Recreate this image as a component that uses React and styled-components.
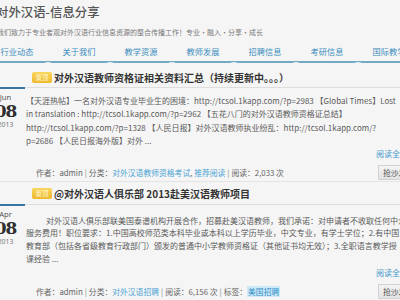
import React from 'react';
import styled, { createGlobalStyle } from 'styled-components';

const GlobalStyle = createGlobalStyle`
    html, body {
        margin: 0;
        padding: 0;
        background: #f5f5f5;
        overflow: hidden;
    }
    body {
        font-family: "Noto Sans CJK SC", sans-serif;
        color: #555;
    }
`;

const Page = styled.div`
    width: 426px;
    margin-left: -14px;
`;

const Header = styled.header`
    padding: 3px 0 0 10px;
`;

const SiteTitle = styled.h1`
    margin: 0;
    font-size: 12.4px;
    line-height: 18px;
    font-weight: 500;
    color: #555;
`;

const Slogan = styled.p`
    margin: 5px 0 0 1px;
    font-size: 7px;
    line-height: 12px;
    color: #7a7a7a;
    white-space: nowrap;
`;

const Nav = styled.nav`
    display: flex;
    margin-top: 3px;
    border-bottom: 2px solid #74a9c4;
`;

const NavItem = styled.a`
    position: relative;
    width: 62px;
    flex: none;
    height: 20px;
    line-height: 20px;
    text-align: center;
    font-size: 8.2px;
    color: #3c8dbf;

    &::after {
        content: '';
        position: absolute;
        right: -3px;
        bottom: -2px;
        width: 6px;
        height: 1px;
        background: #d6e7ef;
        border-radius: 2px 2px 0 0;
    }
`;

const Post = styled.article`
    padding-top: ${p => p.$first ? '4px' : '2px'};
    border-bottom: ${p => p.$first ? '1px solid #e4e4e4' : 'none'};
`;

const PostHead = styled.div`
    display: flex;
    align-items: center;
    gap: 2px;
    height: 20px;
    padding-left: 46px;
`;

const Badge = styled.span`
    display: inline-block;
    width: 20px;
    height: 11px;
    line-height: 11px;
    border-radius: 2px;
    background: linear-gradient(#f9d65c, #efb92c);
    color: #fff6d8;
    font-size: 6.5px;
    text-align: center;
`;

const PostTitle = styled.h2`
    margin: 0;
    font-size: 10px;
    font-weight: 700;
    color: #333;
    white-space: nowrap;
`;

const PostBody = styled.div`
    display: grid;
    grid-template-columns: 39px 1fr;
`;

const DateCol = styled.div`
    border-top: 2px solid #3675a4;
    display: flex;
    flex-direction: column;
    align-items: center;
    padding-top: 3px;
`;

const Month = styled.span`
    font-family: "Noto Sans", sans-serif;
    font-size: 7.6px;
    line-height: 10px;
    color: #555;
`;

const Day = styled.span`
    font-family: "DejaVu Serif", serif;
    font-weight: 700;
    font-size: 17px;
    line-height: 18px;
    color: #2f2f2f;
    letter-spacing: -1px;
`;

const Year = styled.span`
    font-family: "Noto Sans", sans-serif;
    font-size: 6.8px;
    line-height: 10px;
    color: #777;
`;

const Content = styled.div`
    border-top: 1px solid #dedede;
    padding: 6px 0 0 1px;
`;

const Excerpt = styled.p`
    margin: ${p => p.$indent ? '4px' : '0'} 0 0;
    font-size: 8px;
    line-height: ${p => p.$indent ? '12.7px' : '13.3px'};
    color: #5a5a5a;
    white-space: nowrap;
    overflow: hidden;
    text-indent: ${p => p.$indent ? '20px' : '0'};
`;

const More = styled.div`
    text-align: right;
    padding-right: 4px;
    font-size: 8px;
    line-height: 13px;
`;

const MoreLink = styled.a`
    color: #3d95c9;
`;

const MetaRow = styled.div`
    display: flex;
    align-items: center;
    justify-content: space-between;
    height: 16px;
    margin-top: 4.5px;
    padding-left: 10px;
    font-size: 7.8px;
    color: #666;
    white-space: nowrap;
`;

const Meta = styled.span``;

const MetaLink = styled.a`
    color: ${p => p.$tag ? '#2f8fc7' : '#4aa3d4'};
    background: ${p => p.$tag ? '#cfeaf7' : 'transparent'};
    padding: ${p => p.$tag ? '0 1px' : '0'};
`;

const Sep = styled.span`
    color: #888;
    margin: 0 2px;
`;

const SofaButton = styled.button`
    height: 15px;
    padding: 0 4px;
    border: 1px solid #d2d2d2;
    background: linear-gradient(#f4f4f4, #e3e3e3);
    color: #555;
    font-size: 7.8px;
    font-family: "Noto Sans CJK SC", sans-serif;
    width: 34px;
    text-align: left;
`;

const navItems = ['行业动态', '关于我们', '教学资源', '教师发展', '招聘信息', '考研信息', '国际教学'];

export default function App() {
    return (
        <Page>
            <GlobalStyle />
            <Header>
                <SiteTitle>对外汉语-信息分享</SiteTitle>
                <Slogan>我们致力于专业者观对外汉语行业信息资源的整合传播工作！专业·融入·分享·成长</Slogan>
            </Header>
            <Nav>
                {navItems.map(n => <NavItem key={n}>{n}</NavItem>)}
            </Nav>

            <Post $first>
                <PostHead>
                    <Badge>置顶</Badge>
                    <PostTitle>对外汉语教师资格证相关资料汇总（持续更新中。。。）</PostTitle>
                </PostHead>
                <PostBody>
                    <DateCol>
                        <Month>Jun</Month>
                        <Day>08</Day>
                        <Year>2013</Year>
                    </DateCol>
                    <Content>
                        <Excerpt>
                            【天涯热帖】一名对外汉语专业毕业生的困境：http://tcsol.1kapp.com/?p=2983 【Global Times】Lost<br />
                            in translation : http://tcsol.1kapp.com/?p=2962 【五花八门的对外汉语教师资格证总结】<br />
                            http://tcsol.1kapp.com/?p=1328 【人民日报】对外汉语教师执业纷乱：http://tcsol.1kapp.com/?<br />
                            p=2686 【人民日报海外版】对外 ...
                        </Excerpt>
                        <More><MoreLink>阅读全文</MoreLink></More>
                        <MetaRow>
                            <Meta>
                                作者：admin<Sep>|</Sep>分类：<MetaLink>对外汉语教师资格考试</MetaLink>, <MetaLink>推荐阅读</MetaLink><Sep>|</Sep>阅读：2,033 次
                            </Meta>
                            <SofaButton>抢沙发</SofaButton>
                        </MetaRow>
                    </Content>
                </PostBody>
            </Post>

            <Post>
                <PostHead>
                    <Badge>置顶</Badge>
                    <PostTitle>@对外汉语人俱乐部 2013赴美汉语教师项目</PostTitle>
                </PostHead>
                <PostBody>
                    <DateCol>
                        <Month>Apr</Month>
                        <Day>08</Day>
                        <Year>2013</Year>
                    </DateCol>
                    <Content>
                        <Excerpt $indent>
                            对外汉语人俱乐部联美国泰谱机构开展合作，招募赴美汉语教师，我们承诺：对申请者不收取任何中介<br />
                            服务费用！职位要求：1.中国高校师范类本科毕业或本科以上学历毕业，中文专业，有学士学位；2.有中国<br />
                            教育部（包括各省级教育行政部门）颁发的普通中小学教师资格证（其他证书均无效）；3.全职语言教学授<br />
                            课经验 ...
                        </Excerpt>
                        <More><MoreLink>阅读全文</MoreLink></More>
                        <MetaRow>
                            <Meta>
                                作者：admin<Sep>|</Sep>分类：<MetaLink>对外汉语招聘</MetaLink><Sep>|</Sep>阅读：6,156 次<Sep>|</Sep>标签：<MetaLink $tag>美国招聘</MetaLink>
                            </Meta>
                            <SofaButton>抢沙发</SofaButton>
                        </MetaRow>
                    </Content>
                </PostBody>
            </Post>
        </Page>
    );
}
